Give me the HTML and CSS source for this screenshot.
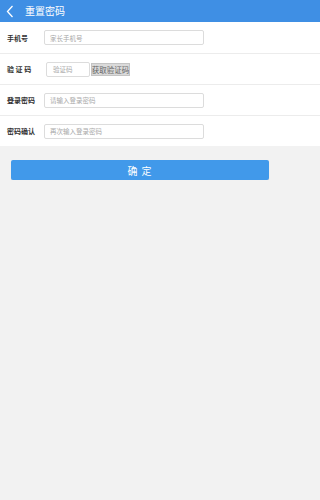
FILE: index.html
```html
<!DOCTYPE html>
<html lang="zh">
<head>
<meta charset="utf-8">
<link rel="stylesheet" href="styles.css">
</head>
<body>
<header class="topbar">
  <svg class="back" width="8" height="13" viewBox="0 0 8 13"><path d="M6.5 1 L1.5 6.5 L6.5 12" fill="none" stroke="#fff" stroke-width="1.3"/></svg>
  <span class="title">重置密码</span>
</header>
<main class="form">
  <div class="row">
    <span class="label">手机号</span>
    <div class="input wide">家长手机号</div>
  </div>
  <div class="row">
    <span class="label code">验 证 码</span>
    <div class="input short">验证码</div>
    <div class="getcode">获取验证码</div>
  </div>
  <div class="row">
    <span class="label">登录密码</span>
    <div class="input wide">请输入登录密码</div>
  </div>
  <div class="row last">
    <span class="label">密码确认</span>
    <div class="input wide">再次输入登录密码</div>
  </div>
</main>
<div class="actions">
  <div class="submit">确 定</div>
</div>
</body>
</html>
```
FILE: styles.css
```css
html, body {
  margin: 0;
  padding: 0;
  background: #f2f2f2;
  font-family: "Noto Sans CJK SC", "Noto Sans", sans-serif;
}
.topbar {
  height: 22px;
  background: #3f8fe4;
  display: flex;
  align-items: center;
  padding-left: 6px;
  box-sizing: border-box;
}
.back {
  display: block;
}
.title {
  color: #fff;
  font-size: 10px;
  margin-left: 11px;
  line-height: 1;
}
.form {
  background: #fff;
}
.row {
  height: 30px;
  display: flex;
  align-items: center;
  border-bottom: 1px solid #ececec;
  padding-left: 7px;
}
.row:first-child {
  height: 31px;
}
.row.last {
  border-bottom: none;
}
.label {
  width: 37px;
  font-size: 7px;
  font-weight: bold;
  color: #333;
}
.label.code {
  width: 39px;
}
.input {
  height: 15px;
  box-sizing: border-box;
  border: 1px solid #dcdcdc;
  border-radius: 2px;
  font-size: 6.5px;
  color: #a8a8a8;
  display: flex;
  align-items: center;
  padding-left: 5px;
}
.input.wide {
  width: 160px;
}
.input.short {
  width: 44px;
  padding-left: 6px;
}
.getcode {
  margin-left: 1px;
  height: 13px;
  width: 39px;
  box-sizing: border-box;
  background: #dadada;
  border: 1px solid #c4c4c4;
  font-size: 7.5px;
  color: #666;
  display: flex;
  align-items: center;
  justify-content: center;
  white-space: nowrap;
  overflow: hidden;
}
.actions {
  padding: 14px 0 0 11px;
}
.submit {
  width: 258px;
  height: 20px;
  background: #4199ea;
  border-radius: 2px;
  color: #fff;
  font-size: 10px;
  letter-spacing: 1px;
  display: flex;
  align-items: center;
  justify-content: center;
  box-shadow: 0 1px 1px rgba(0,0,0,0.1);
}
```
